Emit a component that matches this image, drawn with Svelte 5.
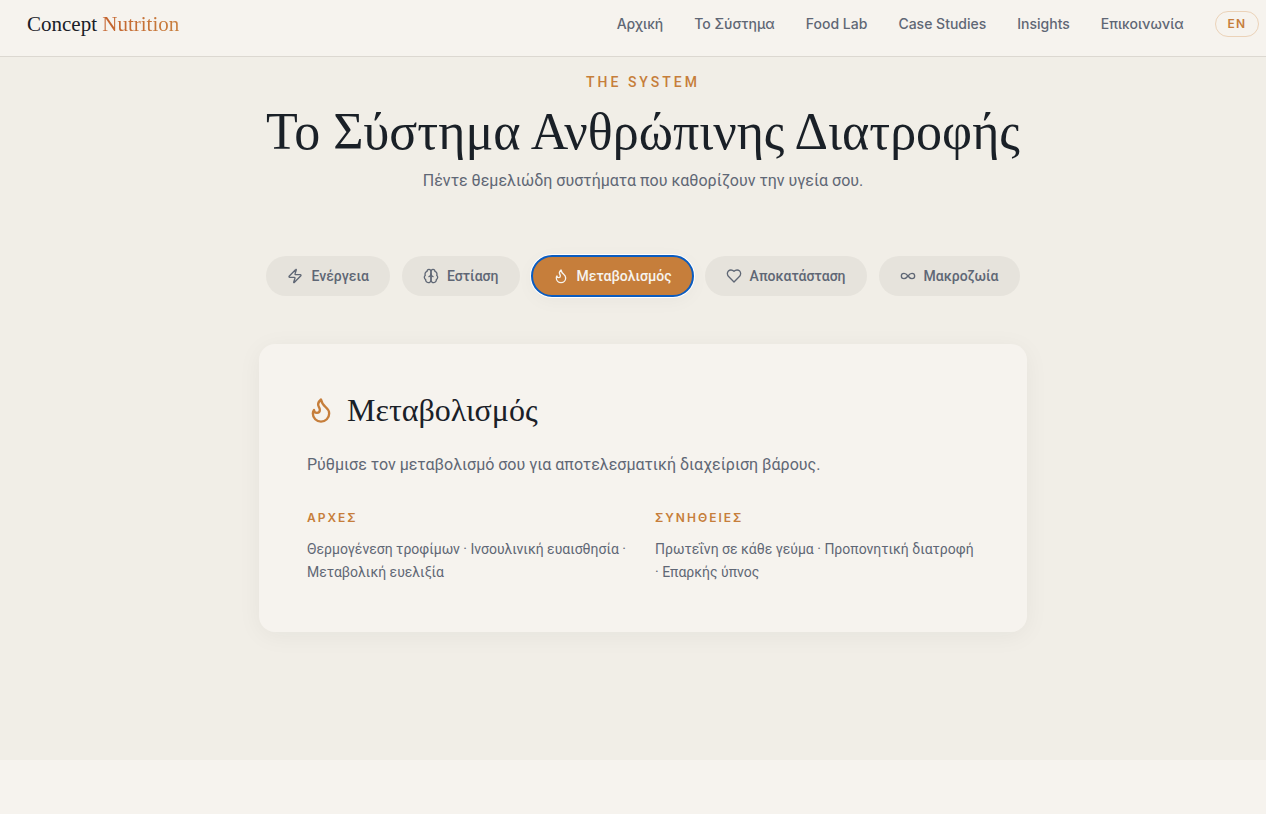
<script>
  const navLinks = ['Αρχική', 'Το Σύστημα', 'Food Lab', 'Case Studies', 'Insights', 'Επικοινωνία'];

  const icons = {
    zap: ['M4 14a1 1 0 0 1-.78-1.63l9.9-10.2a.5.5 0 0 1 .86.46l-1.92 6.02A1 1 0 0 0 13 10h7a1 1 0 0 1 .78 1.63l-9.9 10.2a.5.5 0 0 1-.86-.46l1.92-6.02A1 1 0 0 0 11 14z'],
    brain: [
      'M12 5a3 3 0 1 0-5.997.125 4 4 0 0 0-2.526 5.77 4 4 0 0 0 .556 6.588A4 4 0 1 0 12 18Z',
      'M12 5a3 3 0 1 1 5.997.125 4 4 0 0 1 2.526 5.77 4 4 0 0 1-.556 6.588A4 4 0 1 1 12 18Z',
      'M15 13a4.5 4.5 0 0 1-3-4 4.5 4.5 0 0 1-3 4'
    ],
    flame: ['M8.5 14.5A2.5 2.5 0 0 0 11 12c0-1.38-.5-2-1-3-1.072-2.143-.224-4.054 2-6 .5 2.5 2 4.9 4 6.5 2 1.6 3 3.5 3 5.5a7 7 0 1 1-14 0c0-1.153.433-2.294 1-3a2.5 2.5 0 0 0 2.5 2.5z'],
    heart: ['M19 14c1.49-1.46 3-3.21 3-5.5A5.5 5.5 0 0 0 16.5 3c-1.76 0-3 .5-4.5 2-1.5-1.5-2.74-2-4.5-2A5.5 5.5 0 0 0 2 8.5c0 2.3 1.5 4.05 3 5.5l7 7Z'],
    infinity: ['M12 12c-2-2.67-4-4-6-4a4 4 0 1 0 0 8c2 0 4-1.33 6-4Zm0 0c2 2.67 4 4 6 4a4 4 0 0 0 0-8c-2 0-4 1.33-6 4Z']
  };

  const systems = [
    { id: 'energy', label: 'Ενέργεια', icon: 'zap' },
    { id: 'focus', label: 'Εστίαση', icon: 'brain' },
    { id: 'metabolism', label: 'Μεταβολισμός', icon: 'flame' },
    { id: 'recovery', label: 'Αποκατάσταση', icon: 'heart' },
    { id: 'longevity', label: 'Μακροζωία', icon: 'infinity' }
  ];

  const columns = [
    { title: 'ΑΡΧΕΣ', items: ['Θερμογένεση τροφίμων', 'Ινσουλινική ευαισθησία', 'Μεταβολική ευελιξία'] },
    { title: 'ΣΥΝΗΘΕΙΕΣ', items: ['Πρωτεΐνη σε κάθε γεύμα', 'Προπονητική διατροφή', 'Επαρκής ύπνος'] }
  ];

  let active = $state('metabolism');
  let current = $derived(systems.find((s) => s.id === active));
</script>

{#snippet icon(name, size)}
  <svg width={size} height={size} viewBox="0 0 24 24" fill="none" stroke="currentColor"
    stroke-width="2" stroke-linecap="round" stroke-linejoin="round" aria-hidden="true">
    {#each icons[name] as d}
      <path {d} />
    {/each}
  </svg>
{/snippet}

<header class="navbar">
  <a class="logo" href="#home">Concept <span>Nutrition</span></a>
  <nav>
    {#each navLinks as link}
      <a href="#{link}">{link}</a>
    {/each}
    <button class="lang">EN</button>
  </nav>
</header>

<main class="system">
  <p class="eyebrow">THE SYSTEM</p>
  <h1>Το Σύστημα Ανθρώπινης Διατροφής</h1>
  <p class="subtitle">Πέντε θεμελιώδη συστήματα που καθορίζουν την υγεία σου.</p>

  <div class="tabs" role="tablist">
    {#each systems as system}
      <button
        id="tab-{system.id}"
        class="tab"
        class:active={system.id === active}
        role="tab"
        aria-selected={system.id === active}
        aria-controls="panel"
        onclick={() => (active = system.id)}
      >
        {@render icon(system.icon, 16)}
        {system.label}
      </button>
    {/each}
  </div>

  <section class="card" id="panel" role="tabpanel" aria-labelledby="tab-{active}">
    <h2>
      <span class="card-icon">{@render icon(current.icon, 28)}</span>
      {current.label}
    </h2>
    <p class="lead">Ρύθμισε τον μεταβολισμό σου για αποτελεσματική διαχείριση βάρους.</p>
    <div class="columns">
      {#each columns as column}
        <div>
          <h3>{column.title}</h3>
          <p>{column.items.join(' · ')}</p>
        </div>
      {/each}
    </div>
  </section>
</main>

<style>
  :global(body) {
    background: #f6f3ee;
    color: #5f6775;
    font-family: Roboto, 'Liberation Sans', sans-serif;
  }

  h1, h2, h3, p {
    margin: 0;
  }

  button {
    font-family: inherit;
    cursor: pointer;
  }

  /* Navbar */
  .navbar {
    display: flex;
    align-items: center;
    justify-content: space-between;
    height: 48px;
    padding: 0 7px 8px 27px;
    border-bottom: 1px solid #dcd8d1;
  }
  .logo {
    font-family: Georgia, 'Liberation Serif', serif;
    font-size: 21px;
    color: #1a2027;
    text-decoration: none;
  }
  .logo span {
    background: linear-gradient(90deg, #c4622d, #c87f3e);
    background-clip: text;
    color: transparent;
  }
  nav {
    display: flex;
    align-items: center;
    gap: 31px;
    font-family: Inter, 'Liberation Sans', sans-serif;
  }
  nav a {
    color: inherit;
    font-size: 14px;
    font-weight: 500;
    line-height: 18px;
    text-decoration: none;
  }
  .lang {
    padding: 5px 12px;
    border: 1px solid #ebd2b8;
    border-radius: 20px;
    background: none;
    color: #c67e3b;
    font-size: 12px;
    font-weight: 600;
    line-height: 14px;
    letter-spacing: 1px;
  }

  /* System section */
  .system {
    display: flex;
    flex-direction: column;
    align-items: center;
    padding: 15px 0 128px 20px;
    background: #f1eee7;
    text-align: center;
  }
  .eyebrow {
    color: #c67e3b;
    font-size: 14px;
    font-weight: 500;
    line-height: 20px;
    letter-spacing: 3px;
  }
  h1 {
    margin-top: 10px;
    color: #1a2027;
    font-family: Georgia, 'Liberation Serif', serif;
    font-size: 52px;
    font-weight: 400;
    line-height: 60px;
  }
  .subtitle {
    margin-top: 6px;
    font-size: 16px;
    line-height: 26px;
  }

  .tabs {
    display: flex;
    flex-wrap: wrap;
    justify-content: center;
    gap: 12px;
    margin-top: 62px;
  }
  .tab {
    display: flex;
    align-items: center;
    gap: 8px;
    padding: 10px 21px;
    border: 0;
    border-radius: 20px;
    background: #e6e3dc;
    color: #5f6775;
    font-size: 14px;
    font-weight: 500;
    line-height: 20px;
  }
  .tab.active {
    background: #c67e3b;
    color: #f6f3ee;
    outline: 2px solid #0a5cc0;
    outline-offset: -1px;
    box-shadow: 0 0 0 2px #fff, 0 4px 20px rgba(26, 32, 39, 0.04);
  }

  .card {
    box-sizing: border-box;
    width: 100%;
    max-width: 768px;
    margin-top: 48px;
    padding: 48px;
    border-radius: 16px;
    background: #f6f3ee;
    box-shadow: 0 4px 24px rgba(26, 32, 39, 0.05);
    text-align: left;
  }
  h2 {
    display: flex;
    align-items: center;
    gap: 12px;
    color: #1a2027;
    font-family: Georgia, 'Liberation Serif', serif;
    font-size: 32px;
    font-weight: 400;
    line-height: 36px;
  }
  .card-icon {
    display: flex;
    color: #c67e3b;
  }
  .lead {
    margin-top: 24px;
    font-size: 16px;
    line-height: 26px;
  }
  .columns {
    display: grid;
    grid-template-columns: 1fr 1fr;
    gap: 24px;
    margin-top: 32px;
  }
  h3 {
    color: #c67e3b;
    font-family: Inter, 'Liberation Sans', sans-serif;
    font-size: 12px;
    font-weight: 600;
    line-height: 16px;
    letter-spacing: 2px;
  }
  .columns p {
    margin-top: 12px;
    font-size: 14px;
    line-height: 23px;
  }
</style>
